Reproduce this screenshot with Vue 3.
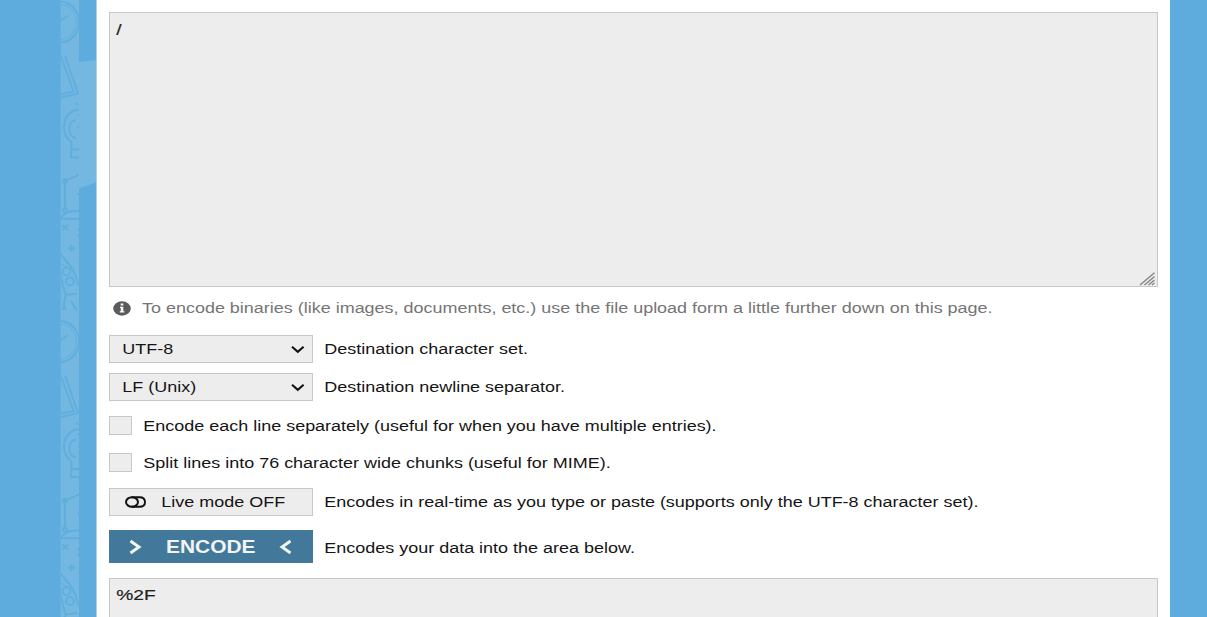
<script setup>
const tiles = [0, 319.5]
</script>

<template>
  <div class="page">
    <svg class="pattern" width="37" height="617" viewBox="0 0 37 617">
      <defs>
        <clipPath id="band"><rect x="0.6" y="0" width="18.4" height="617" /></clipPath>
      </defs>
      <rect x="0.6" width="18.4" height="617" fill="#74b8e2" />
      <path d="M19 62L37 60V182L19 188.500Z" fill="#74b8e2" />
      <path d="M36.500 0V617" stroke="#a6d2ed" stroke-width="1" />
      <g clip-path="url(#band)" fill="none" stroke="#60aedd" stroke-width="1.9">
        <g v-for="y in tiles" :key="y" :transform="`translate(0 ${y})`">
          <ellipse cx="0" cy="22" rx="19" ry="20.500" />
          <ellipse cx="0" cy="22" rx="16.500" ry="17.500" stroke-width="1" />
          <path d="M0 21L8.300 15.600" />
          <path d="M0 54L13.500 91.500L0 94.500M5 56L18 93.500L0 98" />
          <path d="M16 104h2M19 110C9 110 4 118 4 127C4 134 7 139 11.500 142L11 157.500H19M16 120C7 121 7 137 16 138M17.500 115h2M17.500 127h2M11 149.500H19" />
          <path d="M19 175L5 181V210M0 219C5 212 10 211 19 211M0 218.700H19M17 194h2" />
          <circle cx="5" cy="181" r="2" /><circle cx="5" cy="210" r="2" />
          <path d="M2.500 225L8 230M8 225L2.500 230M11.500 244.500V252M7.500 248.300H15.500M17 229.500h2M17 235.500h2M0 172h1" />
          <path d="M0 254C10 263 16 273 18.500 286M0 272C2 282 4 290 5.500 295L17 293.500M5.500 295L3 310M11 301L17 311M3 304L6 310" />
          <path d="M0 263l6 4M3 260l5 4" stroke-width="1" />
          <circle cx="6.500" cy="271.500" r="4" /><circle cx="10" cy="281.500" r="4" />
        </g>
      </g>
    </svg>
    <main class="content">
      <div class="area input">
        <span class="t">/</span>
        <svg class="grip" width="17" height="14" viewBox="0 0 17 14"><path d="M1 13L15.500 0.700M5.500 13L15.500 4.500M9.500 13L15.500 8M13 13L15.500 11" stroke="#858585" stroke-width="1.400" fill="none" /></svg>
      </div>
      <div class="note">
        <svg width="18" height="15" viewBox="0 0 18 15"><ellipse cx="9" cy="7.500" rx="8.800" ry="7.200" fill="#5b5b5b" /><path d="M7.700 2.600h2.600v2H7.700zM7 5.700h3.300v4.500h1v1.400H6.800v-1.400h1V7H7z" fill="#fff" /></svg>
        <span class="t">To encode binaries (like images, documents, etc.) use the file upload form a little further down on this page.</span>
      </div>
      <div class="row r1">
        <div class="box"><span class="t">UTF-8</span><svg class="chev" width="14" height="9" viewBox="0 0 14 9"><path d="M1 1.800L6.800 6.800L12.600 1.800" fill="none" stroke="#111" stroke-width="2.100" /></svg></div>
        <span class="t">Destination character set.</span>
      </div>
      <div class="row r2">
        <div class="box"><span class="t">LF (Unix)</span><svg class="chev" width="14" height="9" viewBox="0 0 14 9"><path d="M1 1.800L6.800 6.800L12.600 1.800" fill="none" stroke="#111" stroke-width="2.100" /></svg></div>
        <span class="t">Destination newline separator.</span>
      </div>
      <div class="row r3"><i class="check"></i><span class="t">Encode each line separately (useful for when you have multiple entries).</span></div>
      <div class="row r4"><i class="check"></i><span class="t">Split lines into 76 character wide chunks (useful for MIME).</span></div>
      <div class="row r5">
        <div class="box live">
          <svg width="21" height="12" viewBox="0 0 21 12"><path d="M6.500 1.200H14.500C18.200 1.200 20 3.300 20 6S18.200 10.800 14.500 10.800H6.500" fill="none" stroke="#111" stroke-width="1.900" /><ellipse cx="7" cy="6" rx="6" ry="4.800" fill="none" stroke="#111" stroke-width="2" /></svg>
          <span class="t">Live mode OFF</span>
        </div>
        <span class="t">Encodes in real-time as you type or paste (supports only the UTF-8 character set).</span>
      </div>
      <div class="row r6">
        <div class="encode">
          <svg width="14" height="16" viewBox="0 0 14 16"><path d="M1.500 2L10 8L1.500 14" fill="none" stroke="#f4f4f4" stroke-width="2.900" /></svg>
          <b class="t">ENCODE</b>
          <svg width="14" height="16" viewBox="0 0 14 16"><path d="M11.500 2L3 8L11.500 14" fill="none" stroke="#f4f4f4" stroke-width="2.900" /></svg>
        </div>
        <span class="t">Encodes your data into the area below.</span>
      </div>
      <div class="area output"><span class="t">%2F</span></div>
    </main>
  </div>
</template>

<style>
body { margin: 0; overflow: hidden; }
</style>

<style scoped>
* { box-sizing: border-box; }
.page { width: 1207px; height: 617px; overflow: hidden; display: flex; background: #5dacdd; padding-left: 60px; font: 16px/18px "Liberation Sans", Arial, sans-serif; color: #151515; }
.pattern { flex: none; display: block; }
.content { width: 1073px; height: 617px; background: #fff; padding: 12px 12px 0; overflow: hidden; }
.t { display: inline-block; white-space: nowrap; transform: translate(-0.7px, 0.4px) scale(1.123, 0.96); transform-origin: left center; }
.area { position: relative; width: 1049px; background: #ededed; border: 1px solid #c8c8c8; padding: 8px 7px; color: #222; }
.area .t { transform: translate(-0.7px, 0.5px) scale(1.2, 0.97); -webkit-text-stroke: 0.2px #222; }
.input { height: 275px; }
.grip { position: absolute; right: 1px; bottom: 0; }
.note { height: 18px; margin-top: 12px; padding-left: 4px; display: flex; align-items: center; gap: 11px; color: #757575; }
.note .t { transform: translateY(0.3px) scale(1.1225, 0.96); }
.row { display: flex; align-items: center; }
.r1, .r2 { height: 28px; }
.r1 { margin-top: 18px; }
.r2 { margin-top: 10px; }
.r3 { margin-top: 15px; height: 19px; }
.r4 { margin-top: 18px; height: 19px; }
.r5 { margin-top: 16px; height: 28px; }
.r6 { margin-top: 14px; height: 33px; }
.r6 > .t { margin-top: 2px; }
.box { flex: none; width: 204px; height: 28px; margin-right: 12px; padding: 0 7px 0 13px; display: flex; align-items: center; justify-content: space-between; background: #ededed; border: 1px solid #c8c8c8; }
.check { flex: none; width: 23px; height: 19px; margin-right: 12px; background: #ededed; border: 1px solid #c8c8c8; }
.live { justify-content: flex-start; gap: 16px; padding-left: 15px; }
.encode { flex: none; width: 204px; height: 33px; margin-right: 12px; padding: 0 20px; display: flex; align-items: center; justify-content: space-between; background: #42799b; color: #f4f4f4; font-size: 18px; }
.encode .t { width: 89px; margin-right: 2px; transform: scaleX(1.162); }
.output { margin-top: 15px; height: 60px; padding-top: 7px; }
</style>
